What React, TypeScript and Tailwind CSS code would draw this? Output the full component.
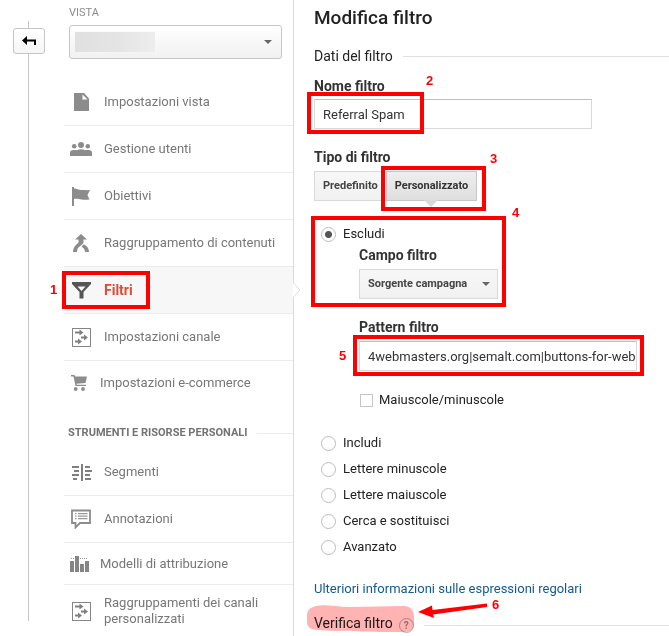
import React from "react";

type IconProps = { className?: string };

const FileIcon = () => (
  <svg width="15" height="18" viewBox="0 0 15 18" fill="#8c8c8c">
    <path d="M0 0h10l5 5.500V18H0z" />
    <path d="M8.500 1.500v5h5z" fill="#fff" />
  </svg>
);

const UsersIcon = () => (
  <svg width="22" height="14" viewBox="0 0 22 14" fill="#8c8c8c">
    <circle cx="11" cy="3" r="3" />
    <circle cx="4.200" cy="4.200" r="2.300" />
    <circle cx="17.800" cy="4.200" r="2.300" />
    <path d="M0 14v-3.500C0 8.500 2 8 5 8c1 0 1.500.2 2 .3C8.200 7.600 9.500 7.300 11 7.300s2.800.3 4 1C15.500 8.200 16 8 17 8c3 0 5 .5 5 2.500V14z" />
  </svg>
);

const FlagIcon = () => (
  <svg width="18" height="19" viewBox="0 0 18 19" fill="#8c8c8c">
    <path d="M0 0h2v1.500c3 0 4 1.500 8 1.500 3 0 5 .3 8 0l-2.500 5 2 4.500c-3 .3-5 .3-8 0C6 12 5 11.500 2 12v7H0z" />
  </svg>
);

const MergeIcon = () => (
  <svg width="16" height="18" viewBox="0 0 16 18" fill="#8c8c8c">
    <path d="M8 0l6 5.500h-3.500V8c0 1-.5 1.700-1.200 2.300L5.500 13.500C4.500 14.500 4 16 4 18H0c0-3 1-5 2.500-6.500L5.500 8.500V5.500H2z" />
    <path d="M8.500 12.500L11 10.200l2.500 2C15 13.500 16 15.500 16 18h-4c0-2-.7-3-1.500-3.800z" />
  </svg>
);

const FunnelIcon = () => (
  <svg width="19" height="17" viewBox="0 0 19 17">
    <path
      fillRule="evenodd"
      fill="#555"
      d="M0 0h19v2l-7.500 8v6.500h-4V10L0 2zM5.500 4.500l4 4.500 4-4.500z"
    />
  </svg>
);

const ChannelIcon = () => (
  <svg width="19" height="19" viewBox="0 0 19 19">
    <rect x=".5" y=".5" width="18" height="18" fill="none" stroke="#858585" />
    <path d="M3 4.500h5M9 9.500h4M3 13.500h4" stroke="#808080" strokeWidth="2" />
    <path
      d="M7.500 1.500l4 3-4 3zM12 6.500l4 3-4 3zM6 10.500l4 3-4 3z"
      fill="#808080"
    />
  </svg>
);

const CartIcon = () => (
  <svg width="16" height="16" viewBox="0 0 16 16" fill="#8c8c8c">
    <path d="M0 0h3.500l.7 1.500H16L14.500 8l-9 .8.3.9H15V11H4.500L2.500 1.500H0z" />
    <circle cx="4.700" cy="14" r="1.900" />
    <circle cx="12" cy="14" r="1.900" />
  </svg>
);

const SegmentsIcon = () => (
  <svg width="21" height="17" viewBox="0 0 21 17" fill="#808080">
    <path d="M10 0h2v17h-2zM1 2h7v2H1zM14 2h5v2h-5zM3 6h5v2H3zM14 6h7v2h-7zM1 10h7v2H1zM14 10h5v2h-5zM2 14h4v2H2zM14 14h6v2h-6z" />
  </svg>
);

const NoteIcon = () => (
  <svg width="20" height="20" viewBox="0 0 20 20">
    <path
      d="M1 1.500h18v12.500H9L4.500 18.500V14H1z"
      fill="none"
      stroke="#8c8c8c"
      strokeWidth="1.800"
    />
    <path
      d="M4 4.700h1.500M7 4.700h9.500M4 7.200h1.500M7 7.200h9.500M4 9.700h1.500M7 9.700h9.500"
      stroke="#999"
      strokeWidth="1.300"
    />
  </svg>
);

const BarsIcon = () => (
  <svg width="19" height="17" viewBox="0 0 19 17" fill="#858585">
    <path d="M0 6h4v11H0zM5 1h4v16H5zM10 9h4v8h-4zM15 6h4v11h-4z" />
    <path
      d="M1 3.500h4M10 3.500h7"
      stroke="#999"
      strokeDasharray="1 1"
    />
  </svg>
);

const BackIcon = () => (
  <svg width="14" height="10" viewBox="0 0 14 10">
    <path d="M0 4.500L5 0v3.500h9V9h-2V5.500H5V9z" fill="#000" />
  </svg>
);

const Caret = ({ className = "" }: IconProps) => (
  <svg
    width="8"
    height="4"
    viewBox="0 0 8 4"
    className={`pointer-events-none absolute ${className}`}
  >
    <path d="M0 0h8L4 4z" fill="#666" />
  </svg>
);

// red frame with its step number, laid over the element it points at
const Step = ({
  n,
  frame,
  label,
}: {
  n: number;
  frame: string;
  label: string;
}) => (
  <>
    <span
      className={`pointer-events-none absolute z-10 border-4 border-[#ff0000] ${frame}`}
    />
    <span
      className={`pointer-events-none absolute z-10 text-[13px] leading-4 font-bold text-[#ff0000] font-["Liberation_Sans",sans-serif] ${label}`}
    >
      {n}
    </span>
  </>
);

type Item = {
  label: string;
  icon: React.ReactNode;
  row?: string;
  narrow?: boolean;
  active?: boolean;
};

const viewItems: Item[] = [
  { label: "Impostazioni vista", icon: <FileIcon /> },
  { label: "Gestione utenti", icon: <UsersIcon /> },
  { label: "Obiettivi", icon: <FlagIcon /> },
  { label: "Raggruppamento di contenuti", icon: <MergeIcon /> },
  { label: "Filtri", icon: <FunnelIcon />, active: true },
  { label: "Impostazioni canale", icon: <ChannelIcon /> },
  {
    label: "Impostazioni e-commerce",
    icon: <CartIcon />,
    row: "h-[43px]",
    narrow: true,
  },
];

const toolItems: Item[] = [
  { label: "Segmenti", icon: <SegmentsIcon />, row: "h-[47px] border-b" },
  { label: "Annotazioni", icon: <NoteIcon />, row: "h-[47px] border-b" },
  {
    label: "Modelli di attribuzione",
    icon: <BarsIcon />,
    row: "h-[42px] border-b",
    narrow: true,
  },
  {
    label: "Raggruppamenti dei canali personalizzati",
    icon: <ChannelIcon />,
    row: "h-[52px]",
  },
];

const NavItem = ({
  label,
  icon,
  row = "h-[47px] border-b",
  narrow,
  active,
}: Item) => (
  <li
    className={`relative border-[#ebebeb] ${row} ${active ? "bg-[#f7f7f7]" : ""}`}
  >
    <a
      href="#"
      className={`flex h-full items-center pr-4 leading-4 ${active ? "text-sm font-bold text-[#dd4b39]" : "text-[#777]"}`}
    >
      <span
        className={`flex shrink-0 items-center justify-center ${narrow ? "mr-1.5 w-[30px]" : "mr-1.5 w-[34px]"}`}
      >
        {icon}
      </span>
      {label}
    </a>
    {active && (
      <>
        <svg
          width="8"
          height="16"
          viewBox="0 0 8 16"
          className="absolute top-[15px] -right-2"
        >
          <path d="M0 .5L7 8 0 15.500" fill="#fff" stroke="#dcdcdc" />
        </svg>
        <Step
          n={1}
          frame="-left-0.5 top-1 h-[38px] w-[88px]"
          label="-left-3.5 top-[15px]"
        />
      </>
    )}
  </li>
);

const Radio = ({
  label,
  defaultChecked,
}: {
  label: string;
  defaultChecked?: boolean;
}) => (
  <label className="ml-[7px] flex h-[26px] w-fit items-center gap-[7px]">
    <input
      type="radio"
      name="azione"
      defaultChecked={defaultChecked}
      className="h-[15px] w-[15px] appearance-none rounded-full border border-[#bdbdbd] bg-white checked:bg-[radial-gradient(circle,#555_0_3px,#fff_4px)]"
    />
    {label}
  </label>
);

const inputStyle =
  "block h-[30px] w-full border border-[#d9d9d9] border-t-[#c0c0c0] bg-white pl-2 text-[#333] outline-none";

const App = () => {
  return (
    <div className='flex min-h-screen bg-white text-[13px] text-[#222] font-["Roboto",sans-serif]'>
      <div className="relative w-16 shrink-0">
        <span className="absolute top-[21px] bottom-4 left-7 w-px bg-[#c6c6c6]" />
        <button
          type="button"
          aria-label="Indietro"
          className="relative mt-7 ml-[13px] flex h-[26px] w-8 items-center justify-center rounded-[3px] border border-[#c6c6c6] bg-gradient-to-b from-white to-[#f5f5f5]"
        >
          <BackIcon />
        </button>
      </div>

      <nav className="w-[230px] shrink-0 border-r border-[#d9d9d9]">
        <div className="px-[5px] pt-[5px]">
          <label
            htmlFor="vista"
            className="block h-5 text-[11px] leading-4 text-[#8c8c8c]"
          >
            VISTA
          </label>
          <div className="relative mr-1.5">
            <select
              id="vista"
              className="block h-[34px] w-full appearance-none rounded-[3px] border border-[#c6c6c6] bg-gradient-to-b from-white to-[#f1f1f1]"
            >
              <option></option>
            </select>
            <span className="pointer-events-none absolute top-[7px] left-1.5 h-5 w-20 bg-gradient-to-r from-[#e0e0e0] via-[#e4e4e4] to-[#ededed]" />
            <Caret className="top-[15px] right-[10px]" />
          </div>
        </div>

        <ul className="mt-5">
          {viewItems.map((item) => (
            <NavItem key={item.label} {...item} />
          ))}
        </ul>

        <div className="mt-[19px] flex h-5 items-center gap-2.5 pl-1">
          <h2 className="text-[11px] font-bold whitespace-nowrap text-[#737373]">
            STRUMENTI E RISORSE PERSONALI
          </h2>
          <span className="h-px flex-1 bg-[#ebebeb]" />
        </div>

        <ul className="mt-1.5">
          {toolItems.map((item) => (
            <NavItem key={item.label} {...item} />
          ))}
        </ul>
      </nav>

      <main className="min-w-0 flex-1 pl-5">
        <h1 className="flex h-9 items-center text-[19px] font-medium">
          Modifica filtro
        </h1>
        <div className="flex h-10 items-center gap-2.5">
          <h2 className="text-sm">Dati del filtro</h2>
          <span className="h-px flex-1 bg-[#e0e0e0]" />
        </div>

        <form onSubmit={(e) => e.preventDefault()}>
          <label
            htmlFor="nome"
            className="block h-[23px] text-sm leading-5 font-bold text-[#333]"
          >
            Nome filtro
          </label>
          <div className="relative max-w-[278px]">
            <input
              id="nome"
              type="text"
              defaultValue="Referral Spam"
              className={inputStyle}
            />
            <Step
              n={2}
              frame="-left-[7px] -top-[7px] h-[42px] w-[117px]"
              label="left-28 -top-[26px]"
            />
          </div>

          <p className="mt-[18px] mb-1 text-sm leading-5 font-bold text-[#333]">
            Tipo di filtro
          </p>
          <div className="relative flex h-[30px] w-fit text-[11px] font-bold text-[#444]">
            <button
              type="button"
              className="border border-[#d9d9d9] bg-gradient-to-b from-[#f7f7f7] to-[#f1f1f1] px-2"
            >
              Predefinito
            </button>
            <button
              type="button"
              className="relative -ml-px border border-[#c6c6c6] bg-gradient-to-b from-[#eee] to-[#dfdfdf] px-2 text-[#333]"
            >
              Personalizzato
              <svg
                width="14"
                height="7"
                viewBox="0 0 14 7"
                className="absolute top-full left-1/2 -translate-x-1/2"
              >
                <path d="M0 0h14L7 7z" fill="#d9d9d9" />
              </svg>
            </button>
            <Step
              n={3}
              frame="left-[67px] -top-[5px] h-[45px] w-[105px]"
              label="left-44 -top-5"
            />
          </div>

          <div className="relative mt-5">
            <Step
              n={4}
              frame="-left-[3px] -top-[5px] h-[91px] w-[195px]"
              label="left-[198px] -top-4"
            />
            <Radio label="Escludi" defaultChecked />
            <div className="ml-[45px] pr-8">
              <label
                htmlFor="campo"
                className="mb-1.5 block text-sm leading-4 font-bold text-[#333]"
              >
                Campo filtro
              </label>
              <div className="relative w-fit">
                <select
                  id="campo"
                  className="block h-[30px] w-[139px] appearance-none border border-[#d9d9d9] bg-gradient-to-b from-[#f7f7f7] to-[#f1f1f1] px-2 text-[11px] font-bold text-[#444]"
                >
                  <option>Sorgente campagna</option>
                </select>
                <Caret className="top-[13px] right-2" />
              </div>

              <label
                htmlFor="pattern"
                className="mt-5 mb-1.5 block text-sm leading-4 font-bold text-[#333]"
              >
                Pattern filtro
              </label>
              <div className="relative max-w-[278px]">
                <input
                  id="pattern"
                  type="text"
                  defaultValue="4webmasters.org|semalt.com|buttons-for-web"
                  className={inputStyle}
                />
                <Step
                  n={5}
                  frame="-left-1.5 -top-1.5 h-[41px] w-[291px]"
                  label="-left-5 top-[7px]"
                />
              </div>

              <label className="mt-4 flex h-[26px] w-fit items-center gap-1.5">
                <input
                  type="checkbox"
                  className="ml-px h-[13px] w-[13px] appearance-none border border-[#c6c6c6] bg-white checked:bg-[#666]"
                />
                Maiuscole/minuscole
              </label>
            </div>
          </div>

          <div className="mt-[17px]">
            <Radio label="Includi" />
            <Radio label="Lettere minuscole" />
            <Radio label="Lettere maiuscole" />
            <Radio label="Cerca e sostituisci" />
            <Radio label="Avanzato" />
          </div>

          <a
            href="#"
            className="mt-[19px] block w-fit leading-5 text-[#15598f]"
          >
            Ulteriori informazioni sulle espressioni regolari
          </a>
        </form>

        <div className="relative mt-3 flex h-6 items-center">
          <h2 className="text-sm">Verifica filtro</h2>
          <button
            type="button"
            aria-label="Guida"
            className="mt-1 ml-1.5 flex h-[15px] w-[15px] items-center justify-center rounded-full border border-[#b5b5b5] text-[10px] font-bold text-[#999]"
          >
            ?
          </button>
          <span className="mt-1 ml-2.5 h-px flex-1 bg-[#e0e0e0]" />
          {/* marker stroke and arrow */}
          <svg
            width="190"
            height="36"
            viewBox="0 0 190 36"
            className="pointer-events-none absolute -top-3 -left-2 mix-blend-multiply"
          >
            <path
              d="M10 7C20 5 30 8 44 8L98 7C105 7 108 12 108 18V24C108 30 105 33 99 33H80C60 33 45 31 30 32L12 31C5 31 1 28 1 23V16C1 11 5 8 10 7Z"
              fill="#ffb3b3"
            />
            <path
              d="M181 4.500V8L127 15.500 128 19 112 13 126 6.500 126.500 11Z"
              fill="#f00"
            />
          </svg>
          <span className='pointer-events-none absolute -top-3.5 left-[178px] text-[13px] leading-4 font-bold text-[#ff0000] font-["Liberation_Sans",sans-serif]'>
            6
          </span>
        </div>
      </main>
    </div>
  );
};

export default App;
